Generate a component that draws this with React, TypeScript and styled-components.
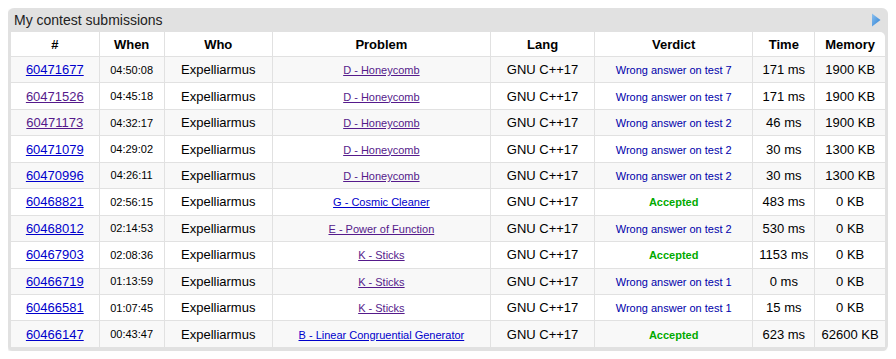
import React from "react";
import styled, { createGlobalStyle } from "styled-components";

const Global = createGlobalStyle`
  body {
    margin: 8px;
    background: #fff;
    font-family: "Liberation Sans", Arial, sans-serif;
    color: #000;
  }
`;

const Frame = styled.div`
  background: #e1e1e1;
  border-radius: 6px;
  padding: 0 3px 4px 3px;
  box-shadow: -1px 1px 2px rgba(0, 0, 0, 0.12);
`;

const TitleBar = styled.div`
  height: 24px;
  display: flex;
  align-items: center;
  justify-content: space-between;
  padding: 0 4px 0 3px;
  font-size: 14px;
  color: #222;
`;

const Arrow = styled.svg`
  width: 10px;
  height: 14px;
  display: block;
`;

const Table = styled.table`
  width: 100%;
  table-layout: fixed;
  border-collapse: collapse;
  background: #fff;
  border-top-right-radius: 5px;
`;

const Th = styled.th`
  height: 24px;
  padding: 0;
  font-size: 13px;
  font-weight: bold;
  text-align: center;
  border-left: 1px solid #e1e1e1;
  border-bottom: 1px solid #e1e1e1;
  &:first-child { border-left: none; }
`;

const Tr = styled.tr<{ $dark: boolean }>`
  background: ${(p) => (p.$dark ? "#f8f8f8" : "#fff")};
`;

const Td = styled.td<{ $small?: boolean }>`
  height: 25.45px;
  padding: 0;
  text-align: center;
  font-size: ${(p) => (p.$small ? "11px" : "13px")};
  border-left: 1px solid #e1e1e1;
  border-top: 1px solid #e1e1e1;
  &:first-child { border-left: none; }
`;

const Link = styled.a<{ $visited: boolean; $small?: boolean }>`
  color: ${(p) => (p.$visited ? "#551a8b" : "#00c")};
  text-decoration: underline;
  font-size: ${(p) => (p.$small ? "11px" : "13px")};
`;

const Verdict = styled.span<{ $ok: boolean }>`
  color: ${(p) => (p.$ok ? "#0a0" : "#00a")};
  font-weight: ${(p) => (p.$ok ? "bold" : "normal")};
  font-size: 11px;
`;

type Row = {
  id: string;
  idV: boolean;
  when: string;
  problem: string;
  pV: boolean;
  verdict: string;
  time: string;
  mem: string;
};

const rows: Row[] = [
  { id: "60471677", idV: false, when: "04:50:08", problem: "D - Honeycomb", pV: true, verdict: "Wrong answer on test 7", time: "171 ms", mem: "1900 KB" },
  { id: "60471526", idV: true, when: "04:45:18", problem: "D - Honeycomb", pV: true, verdict: "Wrong answer on test 7", time: "171 ms", mem: "1900 KB" },
  { id: "60471173", idV: true, when: "04:32:17", problem: "D - Honeycomb", pV: true, verdict: "Wrong answer on test 2", time: "46 ms", mem: "1900 KB" },
  { id: "60471079", idV: false, when: "04:29:02", problem: "D - Honeycomb", pV: true, verdict: "Wrong answer on test 2", time: "30 ms", mem: "1300 KB" },
  { id: "60470996", idV: false, when: "04:26:11", problem: "D - Honeycomb", pV: true, verdict: "Wrong answer on test 2", time: "30 ms", mem: "1300 KB" },
  { id: "60468821", idV: false, when: "02:56:15", problem: "G - Cosmic Cleaner", pV: false, verdict: "Accepted", time: "483 ms", mem: "0 KB" },
  { id: "60468012", idV: false, when: "02:14:53", problem: "E - Power of Function", pV: true, verdict: "Wrong answer on test 2", time: "530 ms", mem: "0 KB" },
  { id: "60467903", idV: false, when: "02:08:36", problem: "K - Sticks", pV: true, verdict: "Accepted", time: "1153 ms", mem: "0 KB" },
  { id: "60466719", idV: false, when: "01:13:59", problem: "K - Sticks", pV: true, verdict: "Wrong answer on test 1", time: "0 ms", mem: "0 KB" },
  { id: "60466581", idV: false, when: "01:07:45", problem: "K - Sticks", pV: true, verdict: "Wrong answer on test 1", time: "15 ms", mem: "0 KB" },
  { id: "60466147", idV: false, when: "00:43:47", problem: "B - Linear Congruential Generator", pV: false, verdict: "Accepted", time: "623 ms", mem: "62600 KB" },
];

const widths = [88, 65, 108, 218, 104, 158, 62, 70];

export default function App() {
  return (
    <>
      <Global />
      <Frame>
        <TitleBar>
          <span>My contest submissions</span>
          <Arrow viewBox="0 0 10 14">
            <defs>
              <linearGradient id="ag" x1="0" y1="0" x2="1" y2="1">
                <stop offset="0" stopColor="#8ec2f0" />
                <stop offset="1" stopColor="#2a7fd4" />
              </linearGradient>
            </defs>
            <path d="M1 0.5 L9.5 7 L1 13.5 Z" fill="url(#ag)" />
          </Arrow>
        </TitleBar>
        <Table>
          <colgroup>
            {widths.map((w, i) => (
              <col key={i} style={{ width: w }} />
            ))}
          </colgroup>
          <thead>
            <tr>
              <Th>#</Th>
              <Th>When</Th>
              <Th>Who</Th>
              <Th>Problem</Th>
              <Th>Lang</Th>
              <Th>Verdict</Th>
              <Th>Time</Th>
              <Th>Memory</Th>
            </tr>
          </thead>
          <tbody>
            {rows.map((r, i) => (
              <Tr key={r.id} $dark={i % 2 === 0}>
                <Td><Link href="#" $visited={r.idV}>{r.id}</Link></Td>
                <Td $small>{r.when}</Td>
                <Td>Expelliarmus</Td>
                <Td><Link href="#" $visited={r.pV} $small>{r.problem}</Link></Td>
                <Td>GNU C++17</Td>
                <Td><Verdict $ok={r.verdict === "Accepted"}>{r.verdict}</Verdict></Td>
                <Td>{r.time}</Td>
                <Td>{r.mem}</Td>
              </Tr>
            ))}
          </tbody>
        </Table>
      </Frame>
    </>
  );
}
